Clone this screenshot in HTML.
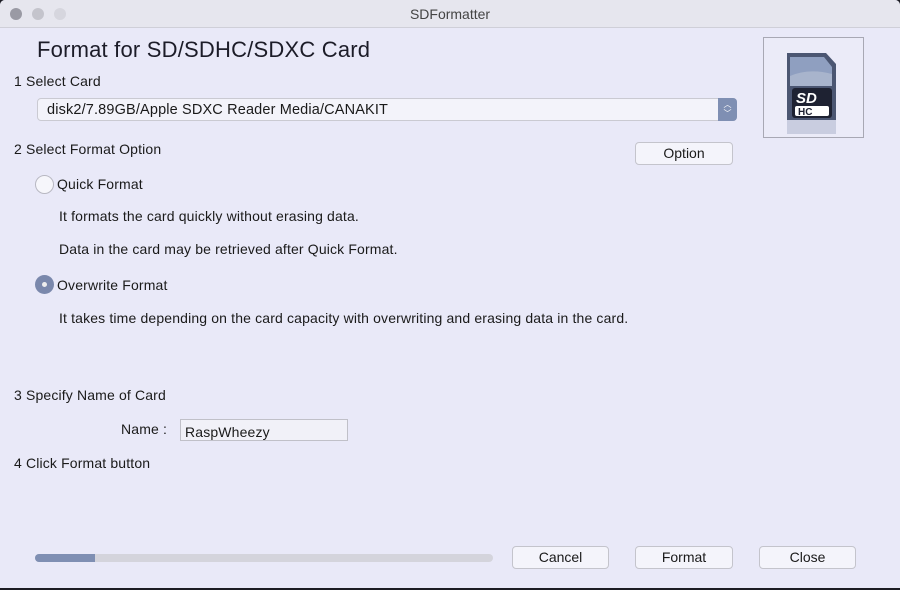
<!DOCTYPE html>
<html><head><style>
*{margin:0;padding:0;box-sizing:border-box}
body{width:900px;height:590px;background:#1c1c24;font-family:"Liberation Sans",sans-serif;color:#1a1a1a;overflow:hidden;position:relative}
.win{position:absolute;left:0;top:0;width:900px;height:588px;background:#e9e9f8;border-radius:5px 5px 0 0;overflow:hidden}
.tb{position:absolute;left:0;top:0;width:900px;height:28px;background:#e6e6ee;border-bottom:1px solid #cfcfd8;text-align:center;font-size:14px;line-height:28px;color:#444}
.dot{position:absolute;top:8px;width:12px;height:12px;border-radius:50%;background:#c8c8d0}
.t{position:absolute;font-size:14px;letter-spacing:0.15px;white-space:nowrap}
.btn{position:absolute;height:23px;background:#f4f4fb;border:1px solid #c4c4cc;border-radius:4px;font-size:14px;text-align:center;line-height:21px}
</style></head><body><div class="win">
<div class="tb">SDFormatter</div>
<div class="dot" style="left:10px;background:#9a9aa4"></div>
<div class="dot" style="left:32px;background:#c4c4cc"></div>
<div class="dot" style="left:54px;background:#d6d6de"></div>
<div class="t" style="left:37px;top:37px;font-size:22px;letter-spacing:0.2px;color:#1c1c28">Format for SD/SDHC/SDXC Card</div>
<div class="t" style="left:14px;top:73px">1 Select Card</div>
<div style="position:absolute;left:37px;top:98px;width:700px;height:23px;background:#f3f3fa;border:1px solid #cacad2;border-radius:4px"></div>
<div class="t" style="left:47px;top:102px;font-size:14.5px">disk2/7.89GB/Apple SDXC Reader Media/CANAKIT</div>
<div style="position:absolute;left:718px;top:98px;width:19px;height:23px;background:#7f8fb3;border-radius:0 4px 4px 0;color:#fff;font-size:8px;line-height:9px;text-align:center;padding-top:2px">︿<br>﹀</div>
<div style="position:absolute;left:763px;top:37px;width:101px;height:101px;border:1px solid #a8a8b4;background:#ebebf8"></div>
<svg style="position:absolute;left:784px;top:50px" width="60" height="86" viewBox="0 0 60 86">
<path d="M3 3 L42 3 L52 14 L52 70 L3 70 Z" fill="#4b5672"/>
<path d="M6 7 L40 7 L48 17 L48 36 L6 36 Z" fill="#8f9fc0"/>
<path d="M6 26 Q25 18 48 24 L48 36 L6 36 Z" fill="#a8b4cc"/>
<rect x="8" y="38" width="40" height="30" rx="3" fill="#1e2232"/>
<text x="12" y="53" font-family="Liberation Sans" font-weight="bold" font-style="italic" font-size="15" fill="#fff">SD</text>
<rect x="11" y="56" width="34" height="10" rx="2" fill="#fff"/>
<text x="14" y="65" font-family="Liberation Sans" font-weight="bold" font-size="10" fill="#1e2232">HC</text>
<rect x="3" y="70" width="49" height="14" fill="#c9cde0"/>
</svg>
<div class="t" style="left:14px;top:141px">2 Select Format Option</div>
<div class="btn" style="left:635px;top:142px;width:98px">Option</div>
<div style="position:absolute;left:35px;top:175px;width:19px;height:19px;border-radius:50%;background:#f6f6fb;border:1px solid #b8b8c2"></div>
<div class="t" style="left:57px;top:176px">Quick Format</div>
<div class="t" style="left:59px;top:208px">It formats the card quickly without erasing data.</div>
<div class="t" style="left:59px;top:241px">Data in the card may be retrieved after Quick Format.</div>
<div style="position:absolute;left:35px;top:275px;width:19px;height:19px;border-radius:50%;background:#7a88ac"></div>
<div style="position:absolute;left:42px;top:282px;width:5px;height:5px;border-radius:50%;background:#eee"></div>
<div class="t" style="left:57px;top:277px">Overwrite Format</div>
<div class="t" style="left:59px;top:310px">It takes time depending on the card capacity with overwriting and erasing data in the card.</div>
<div class="t" style="left:14px;top:387px">3 Specify Name of Card</div>
<div class="t" style="left:121px;top:421px">Name :</div>
<div style="position:absolute;left:180px;top:419px;width:168px;height:22px;background:#f1f1f8;border:1px solid #c0c0c8"></div>
<div class="t" style="left:185px;top:424px">RaspWheezy</div>
<div class="t" style="left:14px;top:455px">4 Click Format button</div>
<div style="position:absolute;left:35px;top:554px;width:458px;height:8px;background:#d4d4dc;border-radius:4px"></div>
<div style="position:absolute;left:35px;top:554px;width:60px;height:8px;background:#7f8fb3;border-radius:4px 0 0 4px"></div>
<div class="btn" style="left:512px;top:546px;width:97px">Cancel</div>
<div class="btn" style="left:635px;top:546px;width:98px">Format</div>
<div class="btn" style="left:759px;top:546px;width:97px">Close</div>
</div></body></html>
